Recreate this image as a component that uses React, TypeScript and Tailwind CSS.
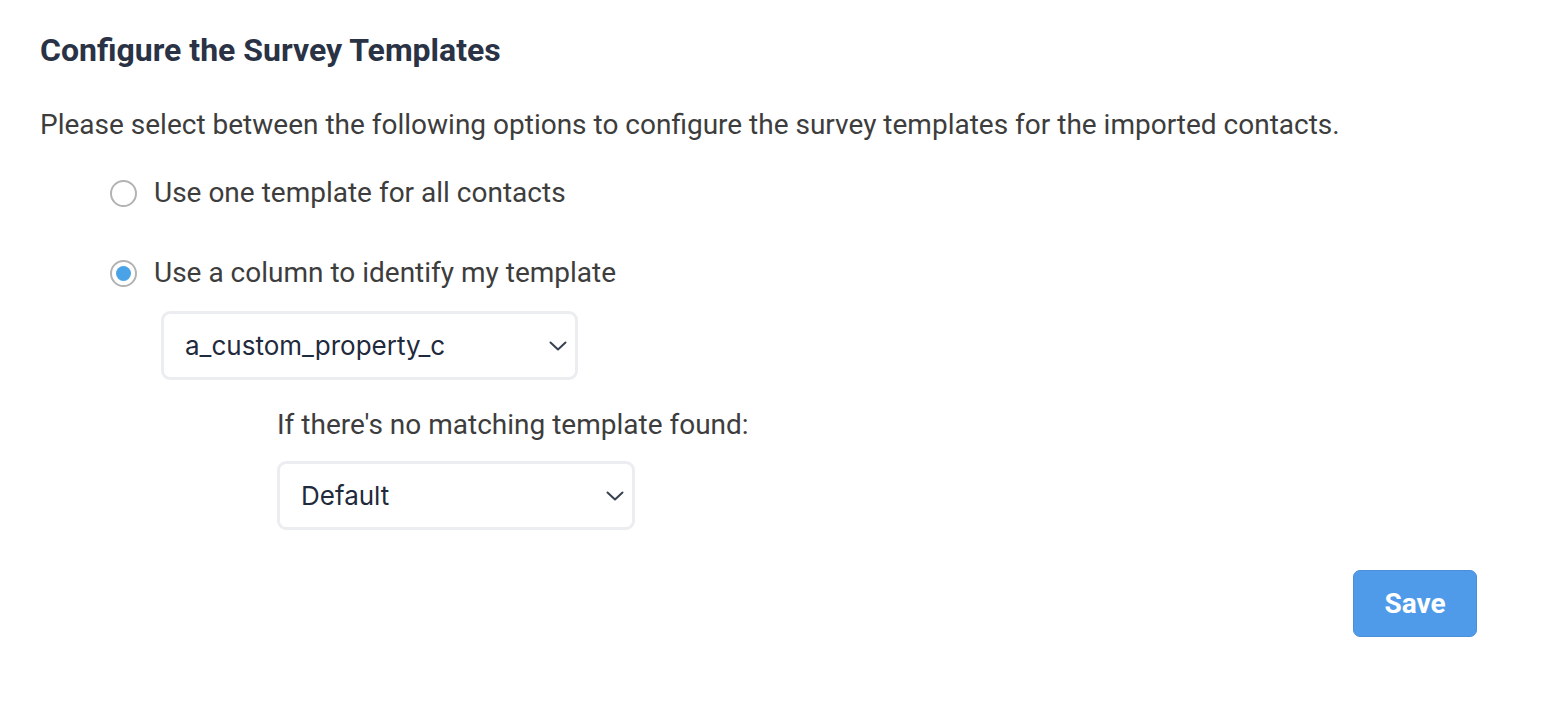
import { useState } from "react";

const Chevron = () => (
  <svg width="18" height="10" viewBox="0 0 18 10" fill="none" className="shrink-0">
    <path d="M1.5 1.5 L9 8.5 L16.5 1.5" stroke="#374151" strokeWidth="2" strokeLinecap="round" strokeLinejoin="round" />
  </svg>
);

const Radio = ({ checked, onClick, label }: { checked: boolean; onClick: () => void; label: string }) => (
  <button type="button" onClick={onClick} className="flex items-center gap-[17px] text-left h-[28px]">
    <span className="w-[27px] h-[27px] rounded-full border-2 border-[#b3b3b3] bg-white flex items-center justify-center">
      {checked && <span className="w-[15px] h-[15px] rounded-full bg-[#4aa3e6]" />}
    </span>
    <span className="text-[28px] text-[#3d3d3d] leading-none">{label}</span>
  </button>
);

const Select = ({ value, width }: { value: string; width: string }) => (
  <div className={`${width} h-[69px] rounded-[9px] border-[3px] border-[#ebedf0] bg-white flex items-center justify-between pl-[21px] pr-[8px]`}>
    <span className="text-[26px] text-[#1f2a3c] font-['Inter',sans-serif]">{value}</span>
    <Chevron />
  </div>
);

const App = () => {
  const [mode, setMode] = useState<"one" | "column">("column");

  return (
    <div className="min-h-screen bg-white font-['Roboto',sans-serif] pl-[40px] pr-[71px] pt-[30px]">
      <h1 className="text-[32px] font-bold text-[#2a3345] leading-[40px]">Configure the Survey Templates</h1>
      <p className="mt-[37px] text-[28px] text-[#3d3d3d] leading-[36px]">
        Please select between the following options to configure the survey templates for the imported contacts.
      </p>

      <div className="pl-[70px] mt-[36px] flex flex-col">
        <Radio checked={mode === "one"} onClick={() => setMode("one")} label="Use one template for all contacts" />
        <div className="mt-[52px]">
          <Radio checked={mode === "column"} onClick={() => setMode("column")} label="Use a column to identify my template" />
        </div>

        <div className="pl-[51px] mt-[24px]">
          <Select value="a_custom_property_c" width="w-[417px]" />
          <div className="pl-[116px]">
            <p className="mt-[27px] text-[28px] text-[#3d3d3d] leading-[36px]">If there's no matching template found:</p>
            <div className="mt-[18px]">
              <Select value="Default" width="w-[358px]" />
            </div>
          </div>
        </div>
      </div>

      <div className="flex justify-end mt-[40px]">
        <button
          type="button"
          className="w-[124px] h-[67px] rounded-[7px] bg-[#4f9be9] border border-[#4b8fd8] text-white text-[28px] font-bold"
        >
          Save
        </button>
      </div>
    </div>
  );
};

export default App;
